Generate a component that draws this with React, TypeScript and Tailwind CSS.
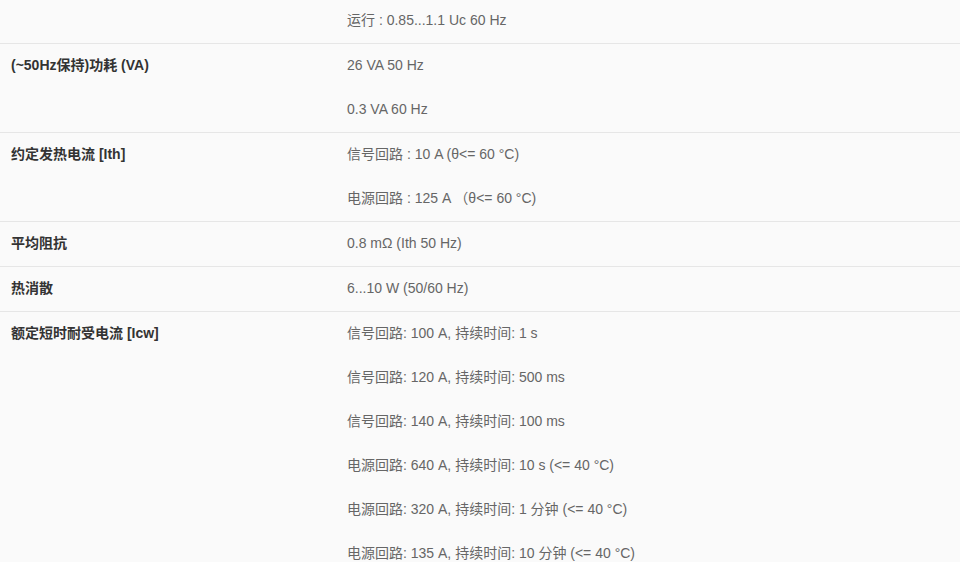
import React from "react";

const rows: { label: string; values: string[] }[] = [
  { label: "", values: ["运行 : 0.85...1.1 Uc 60 Hz"] },
  { label: "(~50Hz保持)功耗 (VA)", values: ["26 VA 50 Hz", "0.3 VA 60 Hz"] },
  { label: "约定发热电流 [Ith]", values: ["信号回路 : 10 A (θ<= 60 °C)", "电源回路 : 125 A （θ<= 60 °C)"] },
  { label: "平均阻抗", values: ["0.8 mΩ (Ith 50 Hz)"] },
  { label: "热消散", values: ["6...10 W (50/60 Hz)"] },
  {
    label: "额定短时耐受电流 [Icw]",
    values: [
      "信号回路: 100 A, 持续时间: 1 s",
      "信号回路: 120 A, 持续时间: 500 ms",
      "信号回路: 140 A, 持续时间: 100 ms",
      "电源回路: 640 A, 持续时间: 10 s (<= 40 °C)",
      "电源回路: 320 A, 持续时间: 1 分钟 (<= 40 °C)",
      "电源回路: 135 A, 持续时间: 10 分钟 (<= 40 °C)",
    ],
  },
];

export default function App() {
  return (
    <div
      className="w-[960px] h-[562px] overflow-hidden bg-[#fafafa] text-[14px]"
      style={{ fontFamily: '"Liberation Sans", Arial, "Noto Sans CJK SC", sans-serif' }}
    >
      <div className="-mt-px">
        {rows.map((r, i) => (
          <div key={i} className="grid grid-cols-[336px_1fr] border-b border-[#e6e6e6]">
            <div className="px-[11px]">
              <div className="h-[44px] pb-[2px] flex items-center font-bold text-[#333333]">{r.label}</div>
            </div>
            <div className="px-[11px]">
              {r.values.map((v, j) => (
                <div key={j} className="h-[44px] pb-[2px] flex items-center text-[#666666]">
                  {v}
                </div>
              ))}
            </div>
          </div>
        ))}
      </div>
    </div>
  );
}
